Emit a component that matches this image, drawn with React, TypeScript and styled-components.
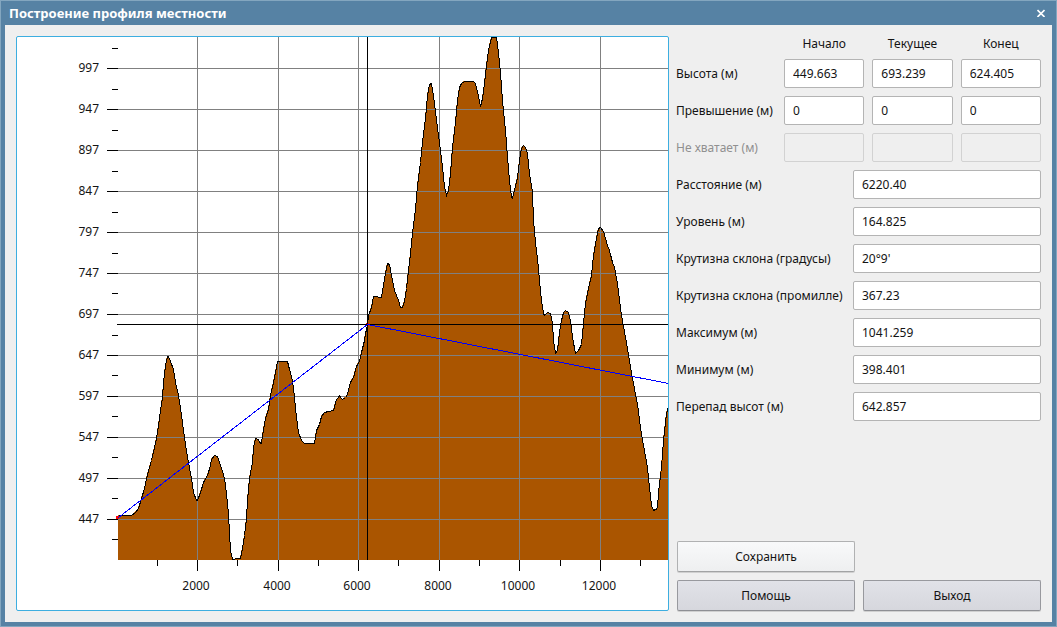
import React from "react";
import styled, { createGlobalStyle } from "styled-components";

const GlobalStyle = createGlobalStyle`
  *, *::before, *::after { box-sizing: border-box; }
  body {
    margin: 0;
    background: #5682a4;
    color: #141414;
    font-family: "Noto Sans", "Open Sans", sans-serif;
    font-size: 12px;
    line-height: 16px;
  }
`;

const Dialog = styled.main`
  display: flex;
  flex-direction: column;
  min-height: 100vh;
  padding: 0 4px 4px;
  background: #5682a4;
  border: 1px solid #83a6bf;
`;

const TitleBar = styled.header`
  display: flex;
  align-items: center;
  justify-content: space-between;
  height: 24px;
  padding: 0 3px 0 4px;
  color: #fff;
`;

const Title = styled.h1`
  margin: 0;
  font-size: 13px;
  line-height: 16px;
  font-weight: 700;
`;

const CloseButton = styled.button`
  display: flex;
  align-items: center;
  justify-content: center;
  width: 16px;
  height: 16px;
  padding: 0;
  border: 0;
  background: none;
  color: #fff;
`;

const Content = styled.div`
  display: flex;
  flex: 1;
  align-items: stretch;
  gap: 7px;
  padding: 11px;
  background: #efefef;
`;

const ChartFrame = styled.section`
  flex: 1;
  min-width: 0;
  background: #fff;
  border: 1px solid #3daee0;
  border-radius: 2px;
  overflow: hidden;
`;

const ChartDrawing = styled.svg`
  display: block;
  width: 100%;
  height: auto;
`;

const AxisLabel = styled.text`
  font-size: 12px;
  fill: #141414;
`;

const SidePanel = styled.form`
  display: flex;
  flex-direction: column;
  justify-content: space-between;
  flex: 0 0 365px;
`;

const Fields = styled.div`
  display: flex;
  flex-direction: column;
  gap: 8px;
`;

const FieldRow = styled.div<{ $disabled?: boolean }>`
  display: flex;
  align-items: center;
  justify-content: space-between;
  color: ${(p) => (p.$disabled ? "#909090" : "inherit")};
`;

const Triple = styled.div`
  display: grid;
  grid-template-columns: repeat(3, 1fr);
  gap: 8px;
  width: 257px;
`;

const Headings = styled(Triple)`
  align-self: flex-end;
  height: 15px;
  text-align: center;
`;

const FieldInput = styled.input<{ $wide?: boolean }>`
  width: ${(p) => (p.$wide ? "188px" : "100%")};
  min-width: 0;
  height: 29px;
  padding: 0 8px;
  border: 1px solid #b4b4b4;
  border-radius: 2px;
  background: #fff;
  color: #141414;
  font: inherit;
  &:disabled {
    background: #efefef;
    border-color: #d2d2d2;
  }
`;

const Actions = styled.div`
  display: grid;
  grid-template-columns: 1fr 1fr;
  gap: 8px;
  padding-left: 1px;
`;

const ActionButton = styled.button<{ $light?: boolean }>`
  grid-column: ${(p) => (p.$light ? "1 / 2" : "auto")};
  height: 31px;
  padding: 0;
  border: 1px solid ${(p) => (p.$light ? "#b0b1b2" : "#98999e")};
  border-bottom-color: ${(p) => (p.$light ? "#a2a3a4" : "#8e8f94")};
  border-radius: 2px;
  background: ${(p) =>
    p.$light
      ? "linear-gradient(#f8f9fa, #eeeff0)"
      : "linear-gradient(#e1e2e8, #d6d7dd)"};
  box-shadow: 0 1px 0 #d0d0d0;
  color: #141414;
  font: inherit;
`;

const Spacer = styled.span``;

const LEFT = 118;
const RIGHT = 668;
const TOP = 37;
const BASE = 560;

const levels = [997, 947, 897, 847, 797, 747, 697, 647, 597, 547, 497, 447];
const levelY = (i: number) => 68 + i * 41;
const minorY = [48, 89, 130, 171, 212, 253, 293, 335, 375, 416, 457, 498, 539];
const distances = [
  { label: "2000", x: 197 },
  { label: "4000", x: 278 },
  { label: "6000", x: 358 },
  { label: "8000", x: 439 },
  { label: "10000", x: 519 },
  { label: "12000", x: 600 },
];
const minorX = [157, 237, 318, 398, 479, 560, 640];

const terrain =
  "118,515 131,515 135,512 138,508 141,498 144,488 147,474 151,460 154,447 156,438 158,425 160,410 162,397 163,382 165,365 167,356 168,356 170,361 173,369 175,382 178,395 180,408 184,437 187,457 191,478 193,492 196,500 197,500 200,492 203,482 207,475 210,465 211,459 214,455 217,456 219,462 222,471 224,478 226,493 228,513 229,533 230,550 232,559 234,559 235,558 240,558 242,548 244,535 246,518 247,500 249,478 252,462 253,447 255,438 258,439 259,442 261,443 262,435 265,418 268,409 270,395 273,382 275,372 277,361 287,361 289,369 292,380 294,397 296,417 298,432 301,440 304,443 314,443 316,430 319,424 321,416 324,412 328,411 333,410 336,399 338,397 339,395 341,398 342,399 345,397 347,394 350,382 353,377 356,366 359,361 361,352 364,340 365,333 367,325 368,315 371,307 373,296 381,297 383,285 385,273 387,263 389,264 391,275 394,290 398,300 400,307 402,307 404,301 406,288 408,270 410,253 412,233 415,209 417,185 420,162 422,142 425,118 427,95 429,84 431,83 432,89 434,103 436,120 439,142 442,167 444,186 446,195 448,190 450,173 452,147 455,122 457,100 459,87 461,83 464,81 473,81 475,83 478,96 480,106 482,98 484,83 486,65 488,50 491,37 496,37 498,52 500,73 502,100 505,130 507,157 509,180 511,197 512,198 514,190 517,177 519,160 521,148 523,145 525,147 527,153 529,173 532,192 533,220 535,242 537,258 539,280 541,300 543,313 544,315 547,312 550,313 552,323 553,340 555,353 557,350 559,332 561,320 563,312 565,310 568,312 570,320 572,337 575,353 578,350 581,344 583,323 585,303 588,288 591,275 593,255 596,238 598,228 600,227 603,231 607,245 609,250 612,262 614,267 617,283 620,308 623,326 625,337 629,360 632,378 636,399 637,403 640,427 643,445 647,467 649,487 651,505 653,510 657,508 658,492 661,467 663,440 666,413 668,406";

function ProfileChart() {
  return (
    <ChartDrawing
      viewBox="17 37 651 573"
      shapeRendering="crispEdges"
      role="img"
      aria-label="Профиль местности"
    >
      <polygon points={`118,560 ${terrain} 668,560`} fill="#aa5500" />
      <g fill="#808080">
        {levels.map((v, i) => (
          <rect key={v} x={LEFT} y={levelY(i)} width={RIGHT - LEFT} height={1} />
        ))}
        {distances.map((d) => (
          <rect key={d.label} x={d.x} y={TOP} width={1} height={BASE - TOP} />
        ))}
      </g>
      <polyline
        points={terrain}
        fill="none"
        stroke="#000"
        transform="translate(0.5 0.5)"
      />
      <g fill="#000">
        {levels.map((v, i) => (
          <rect key={v} x={107} y={levelY(i)} width={11} height={1} />
        ))}
        {minorY.map((y) => (
          <rect key={y} x={112} y={y} width={6} height={1} />
        ))}
        {distances.map((d) => (
          <rect key={d.label} x={d.x} y={BASE} width={1} height={11} />
        ))}
        {minorX.map((x) => (
          <rect key={x} x={x} y={BASE} width={1} height={6} />
        ))}
      </g>
      <g fill="#f00">
        <rect x={116} y={516} width={3} height={3} />
        <rect x={366} y={323} width={3} height={3} />
      </g>
      <g fill="#000">
        <rect x={367} y={TOP} width={1} height={BASE - TOP} />
        <rect x={117} y={324} width={RIGHT - 117} height={1} />
      </g>
      <polyline
        points="118,517 367,324 668,383"
        fill="none"
        stroke="#00f"
        transform="translate(0.5 0.5)"
      />
      {levels.map((v, i) => (
        <AxisLabel key={v} x={99} y={levelY(i) + 4} textAnchor="end">
          {v}
        </AxisLabel>
      ))}
      {distances.map((d) => (
        <AxisLabel key={d.label} x={d.x - 1} y={590} textAnchor="middle">
          {d.label}
        </AxisLabel>
      ))}
    </ChartDrawing>
  );
}

const columns = ["Начало", "Текущее", "Конец"];

const tripleRows = [
  { id: "height", label: "Высота (м)", values: ["449.663", "693.239", "624.405"] },
  { id: "excess", label: "Превышение (м)", values: ["0", "0", "0"] },
  { id: "lack", label: "Не хватает (м)", values: ["", "", ""], disabled: true },
];

const singleRows = [
  { id: "distance", label: "Расстояние (м)", value: "6220.40" },
  { id: "level", label: "Уровень (м)", value: "164.825" },
  { id: "slope-deg", label: "Крутизна склона (градусы)", value: "20°9'" },
  { id: "slope-mil", label: "Крутизна склона (промилле)", value: "367.23" },
  { id: "max", label: "Максимум (м)", value: "1041.259" },
  { id: "min", label: "Минимум (м)", value: "398.401" },
  { id: "range", label: "Перепад высот (м)", value: "642.857" },
];

export default function App() {
  return (
    <>
      <GlobalStyle />
      <Dialog>
        <TitleBar>
          <Title>Построение профиля местности</Title>
          <CloseButton type="button" aria-label="Закрыть">
            <svg width="8" height="8" viewBox="0 0 8 8" stroke="currentColor" strokeWidth="1.6">
              <path d="M0.5 1 7.5 8M7.5 1 0.5 8" />
            </svg>
          </CloseButton>
        </TitleBar>
        <Content>
          <ChartFrame>
            <ProfileChart />
          </ChartFrame>
          <SidePanel onSubmit={(e) => e.preventDefault()}>
            <Fields>
              <Headings>
                {columns.map((c) => (
                  <span key={c}>{c}</span>
                ))}
              </Headings>
              {tripleRows.map((row) => (
                <FieldRow key={row.id} $disabled={row.disabled}>
                  <label htmlFor={`${row.id}-0`}>{row.label}</label>
                  <Triple>
                    {row.values.map((v, i) => (
                      <FieldInput
                        key={columns[i]}
                        id={`${row.id}-${i}`}
                        aria-label={`${row.label}, ${columns[i]}`}
                        defaultValue={v}
                        disabled={row.disabled}
                      />
                    ))}
                  </Triple>
                </FieldRow>
              ))}
              {singleRows.map((row) => (
                <FieldRow key={row.id}>
                  <label htmlFor={row.id}>{row.label}</label>
                  <FieldInput $wide id={row.id} defaultValue={row.value} />
                </FieldRow>
              ))}
            </Fields>
            <Actions>
              <ActionButton type="submit" $light>
                Сохранить
              </ActionButton>
              <Spacer />
              <ActionButton type="button">Помощь</ActionButton>
              <ActionButton type="button">Выход</ActionButton>
            </Actions>
          </SidePanel>
        </Content>
      </Dialog>
    </>
  );
}
